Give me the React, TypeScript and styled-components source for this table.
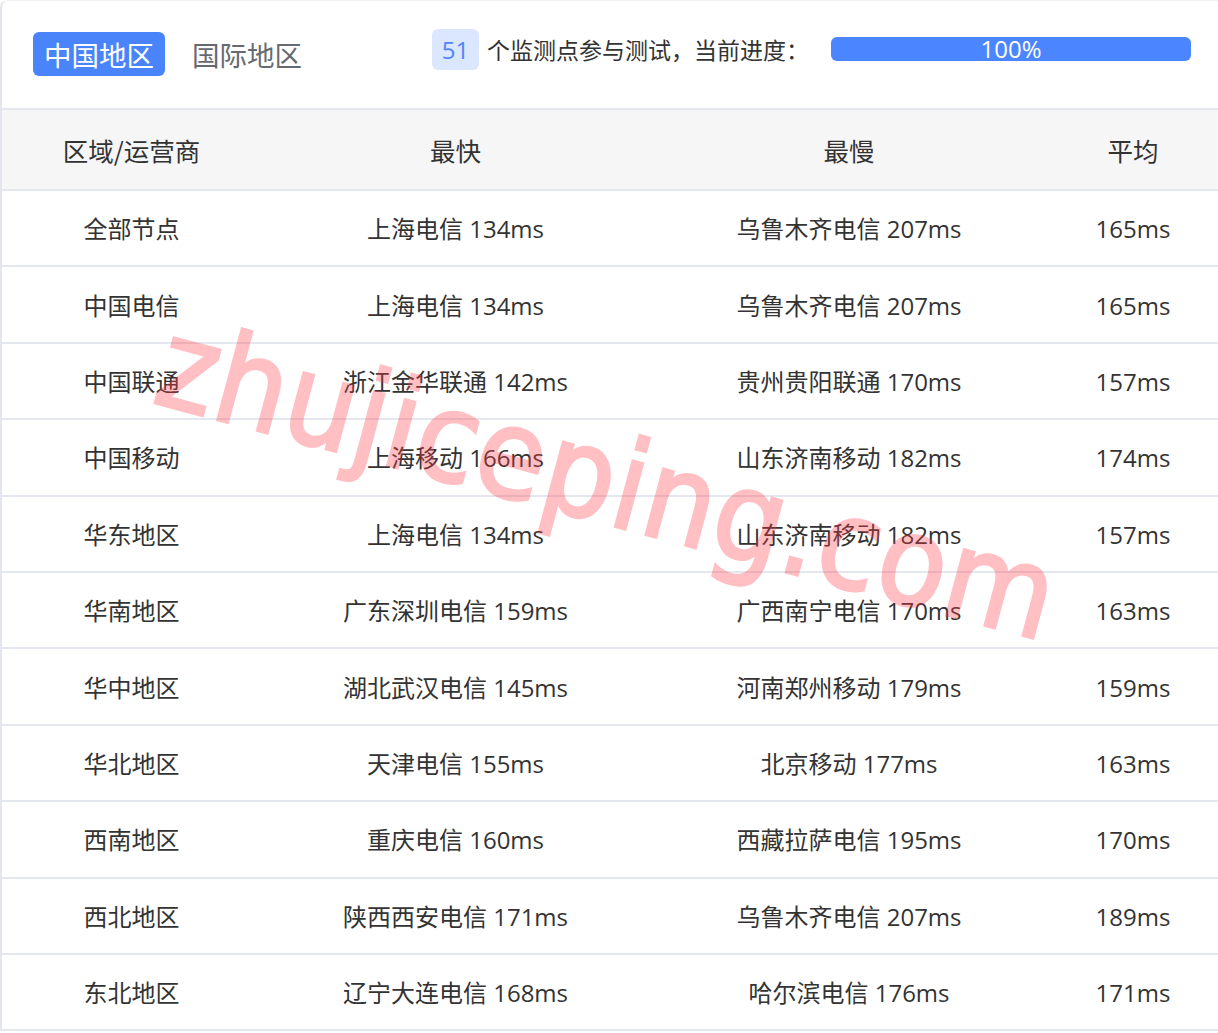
import React from "react";
import styled, { createGlobalStyle } from "styled-components";

const Global = createGlobalStyle`
  html, body { margin: 0; padding: 0; background: #fff; overflow: hidden; }
  body { font-family: "Open Sans", "Noto Sans CJK SC", sans-serif; color: #333; }
`;

const Card = styled.div`
  position: relative;
  box-sizing: border-box;
  width: 100%;
  border-left: 2px solid #e3e7ed;
  border-top: 1px solid #eef0f3;
  border-top-left-radius: 8px;
  background: #fff;
  overflow: hidden;
`;

const TopBar = styled.div`
  height: 107px;
  display: flex;
  align-items: center;
  justify-content: space-between;
  padding: 0 27px 0 31px;
  border-bottom: 2px solid #e4e8ee;
`;

const Tabs = styled.div`
  display: flex;
  align-items: center;
  gap: 16px;
  margin-top: -2px;
`;

const Tab = styled.div<{ $active?: boolean }>`
  height: 44px;
  display: flex;
  align-items: center;
  padding: 0 11px;
  border-radius: 6px;
  font-size: 27.5px;
  font-family: "Noto Sans CJK SC", sans-serif;
  background: ${(p) => (p.$active ? "#4a84fb" : "transparent")};
  color: ${(p) => (p.$active ? "#fff" : "#666a70")};
`;

const Status = styled.div`
  display: flex;
  align-items: center;
  gap: 8px;
  font-size: 23px;
  margin-top: -11px;
`;

const Badge = styled.div`
  width: 47px;
  height: 41px;
  border-radius: 6px;
  background: #dbe6ff;
  color: #4e84ff;
  display: flex;
  align-items: center;
  justify-content: center;
  font-size: 24px;
`;

const StatusText = styled.span`
  font-family: "Noto Sans CJK SC", sans-serif;
  color: #333;
  margin-right: 14px;
`;

const Progress = styled.div`
  width: 360px;
  height: 24px;
  border-radius: 6px;
  background: #e8eefc;
`;

const ProgressFill = styled.div`
  height: 100%;
  background: #4b85ff;
  color: #fff;
  font-size: 24px;
  line-height: 24px;
  text-align: center;
  border-radius: 6px;
`;

const Row = styled.div<{ $head?: boolean }>`
  display: grid;
  grid-template-columns: 259px 389px 398px 1fr;
  align-items: center;
  height: ${(p) => (p.$head ? "79px" : "74.4px")};
  border-bottom: 2px solid #e4e8ee;
  background: ${(p) => (p.$head ? "#f6f6f7" : "#fff")};
`;

const Cell = styled.div`
  text-align: center;
  font-size: 24px;
  line-height: 32px;
  color: #333;
  white-space: nowrap;
  padding-top: 2px;
`;

const HeadCell = styled(Cell)`
  font-size: 25.5px;
  font-family: "Noto Sans CJK SC", sans-serif;
  padding-top: 0;
`;

const Watermark = styled.div`
  position: absolute;
  left: 150px;
  top: 296px;
  font-family: "DejaVu Sans Condensed", "DejaVu Sans", sans-serif;
  font-size: 124px;
  line-height: 1;
  color: #ff3b47;
  -webkit-text-stroke: 3px #ff3b47;
  opacity: 0.32;
  transform: rotate(15deg);
  transform-origin: 0 80%;
  pointer-events: none;
  white-space: nowrap;
  letter-spacing: 1px;
`;

const rows: [string, string, string, string][] = [
  ["全部节点", "上海电信 134ms", "乌鲁木齐电信 207ms", "165ms"],
  ["中国电信", "上海电信 134ms", "乌鲁木齐电信 207ms", "165ms"],
  ["中国联通", "浙江金华联通 142ms", "贵州贵阳联通 170ms", "157ms"],
  ["中国移动", "上海移动 166ms", "山东济南移动 182ms", "174ms"],
  ["华东地区", "上海电信 134ms", "山东济南移动 182ms", "157ms"],
  ["华南地区", "广东深圳电信 159ms", "广西南宁电信 170ms", "163ms"],
  ["华中地区", "湖北武汉电信 145ms", "河南郑州移动 179ms", "159ms"],
  ["华北地区", "天津电信 155ms", "北京移动 177ms", "163ms"],
  ["西南地区", "重庆电信 160ms", "西藏拉萨电信 195ms", "170ms"],
  ["西北地区", "陕西西安电信 171ms", "乌鲁木齐电信 207ms", "189ms"],
  ["东北地区", "辽宁大连电信 168ms", "哈尔滨电信 176ms", "171ms"],
];

export default function App() {
  return (
    <>
      <Global />
      <Card>
        <TopBar>
          <Tabs>
            <Tab $active>中国地区</Tab>
            <Tab>国际地区</Tab>
          </Tabs>
          <Status>
            <Badge>51</Badge>
            <StatusText>个监测点参与测试，当前进度：</StatusText>
            <Progress>
              <ProgressFill style={{ width: "100%" }}>100%</ProgressFill>
            </Progress>
          </Status>
        </TopBar>
        <Row $head>
          <HeadCell>区域/运营商</HeadCell>
          <HeadCell>最快</HeadCell>
          <HeadCell>最慢</HeadCell>
          <HeadCell>平均</HeadCell>
        </Row>
        {rows.map((r, i) => (
          <Row key={i}>
            {r.map((c, j) => (
              <Cell key={j}>{c}</Cell>
            ))}
          </Row>
        ))}
        <Watermark>zhujiceping.com</Watermark>
      </Card>
    </>
  );
}
